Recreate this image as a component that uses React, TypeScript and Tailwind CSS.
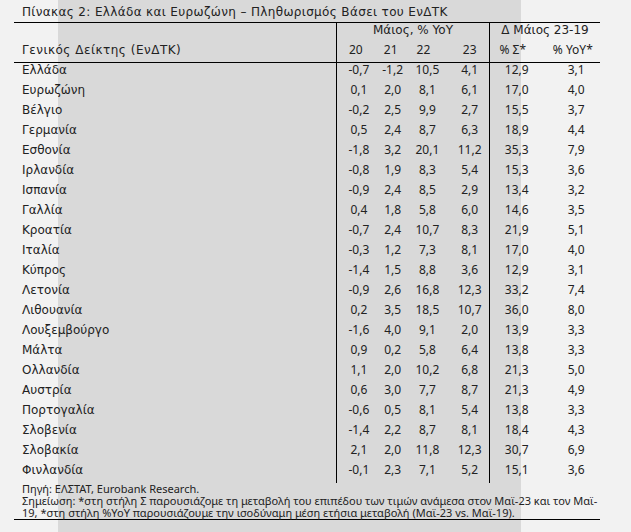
const rows: [string, string, string, string, string, string, string][] = [
  ["Ελλάδα", "-0,7", "-1,2", "10,5", "4,1", "12,9", "3,1"],
  ["Ευρωζώνη", "0,1", "2,0", "8,1", "6,1", "17,0", "4,0"],
  ["Βέλγιο", "-0,2", "2,5", "9,9", "2,7", "15,5", "3,7"],
  ["Γερμανία", "0,5", "2,4", "8,7", "6,3", "18,9", "4,4"],
  ["Εσθονία", "-1,8", "3,2", "20,1", "11,2", "35,3", "7,9"],
  ["Ιρλανδία", "-0,8", "1,9", "8,3", "5,4", "15,3", "3,6"],
  ["Ισπανία", "-0,9", "2,4", "8,5", "2,9", "13,4", "3,2"],
  ["Γαλλία", "0,4", "1,8", "5,8", "6,0", "14,6", "3,5"],
  ["Κροατία", "-0,7", "2,4", "10,7", "8,3", "21,9", "5,1"],
  ["Ιταλία", "-0,3", "1,2", "7,3", "8,1", "17,0", "4,0"],
  ["Κύπρος", "-1,4", "1,5", "8,8", "3,6", "12,9", "3,1"],
  ["Λετονία", "-0,9", "2,6", "16,8", "12,3", "33,2", "7,4"],
  ["Λιθουανία", "0,2", "3,5", "18,5", "10,7", "36,0", "8,0"],
  ["Λουξεμβούργο", "-1,6", "4,0", "9,1", "2,0", "13,9", "3,3"],
  ["Μάλτα", "0,9", "0,2", "5,8", "6,4", "13,8", "3,3"],
  ["Ολλανδία", "1,1", "2,0", "10,2", "6,8", "21,3", "5,0"],
  ["Αυστρία", "0,6", "3,0", "7,7", "8,7", "21,3", "4,9"],
  ["Πορτογαλία", "-0,6", "0,5", "8,1", "5,4", "13,8", "3,3"],
  ["Σλοβενία", "-1,4", "2,2", "8,7", "8,1", "18,4", "4,3"],
  ["Σλοβακία", "2,1", "2,0", "11,8", "12,3", "30,7", "6,9"],
  ["Φινλανδία", "-0,1", "2,3", "7,1", "5,2", "15,1", "3,6"],
];

const App: React.FC = () => {
  return (
    <div className="h-[532px] w-[631px] overflow-hidden bg-[linear-gradient(90deg,#f2f2f2_58px,#d9d9d9_58px,#d9d9d9_521px,#f2f2f2_521px)] font-['Noto_Sans',sans-serif] text-[#222]">
      <div className="ml-[14px] w-[586px]">
        {/* title */}
        <div className="h-[23px] border-b border-black pl-[8px] pt-[5px] font-['DejaVu_Sans',sans-serif] text-[12px] leading-[14px] tracking-[0.35px] whitespace-nowrap">
          Πίνακας 2: Ελλάδα και Ευρωζώνη – Πληθωρισμός Βάσει του ΕνΔΤΚ
        </div>

        {/* header */}
        <div className="flex h-[20px] font-['DejaVu_Sans',sans-serif] text-[12px] leading-[14px]">
          <div className="w-[322px]"></div>
          <div className="w-[153px] border-l border-black text-center">Μάιος, % YoY</div>
          <div className="w-[111px] border-l border-black text-center">Δ Μάιος 23-19</div>
        </div>
        <div className="flex h-[20px] border-b border-black text-[12px] leading-[14px]">
          <div className="w-[322px] pl-[8px] font-['DejaVu_Sans',sans-serif] tracking-[0.5px]">Γενικός Δείκτης (ΕνΔΤΚ)</div>
          <div className="flex w-[153px] border-l border-black">
            <div className="w-[44px] pr-[6px] text-center">20</div>
            <div className="flex w-[24px] justify-center pr-[4px]">21</div>
            <div className="w-[46px] pr-[8px] text-center">22</div>
            <div className="w-[39px] text-center">23</div>
          </div>
          <div className="flex w-[111px] border-l border-black">
            <div className="w-[54px] pr-[8px] text-center">% Σ*</div>
            <div className="w-[57px] pl-[2px] text-center">% YoY*</div>
          </div>
        </div>

        {/* body */}
        {rows.map((r) => (
          <div key={r[0]} className="flex h-[20px] text-[12px] leading-[14px]">
            <div className="w-[322px] pl-[8px] font-['DejaVu_Sans',sans-serif]">{r[0]}</div>
            <div className="flex w-[153px] border-l border-black">
              <div className="w-[44px] text-center">{r[1]}</div>
              <div className="flex w-[24px] justify-center">{r[2]}</div>
              <div className="w-[46px] text-center">{r[3]}</div>
              <div className="w-[39px] text-center">{r[4]}</div>
            </div>
            <div className="flex w-[111px] border-l border-black">
              <div className="w-[54px] text-center">{r[5]}</div>
              <div className="flex w-[57px] justify-center pl-[9px]">{r[6]}</div>
            </div>
          </div>
        ))}

        {/* footer */}
        <div className="border-b border-black pl-[8px] text-[11px] leading-[12px] whitespace-nowrap">
          <p>Πηγή: ΕΛΣΤΑΤ, Eurobank Research.</p>
          <p>
            Σημείωση: *στη στήλη Σ παρουσιάζομε τη μεταβολή του επιπέδου των τιμών ανάμεσα στον Μαϊ-23 και τον Μαϊ-
            <br />
            19, *στη στήλη %YoY παρουσιάζουμε την ισοδύναμη μέση ετήσια μεταβολή (Μαϊ-23 vs. Μαϊ-19).
          </p>
        </div>
      </div>
    </div>
  );
};

export default App;
